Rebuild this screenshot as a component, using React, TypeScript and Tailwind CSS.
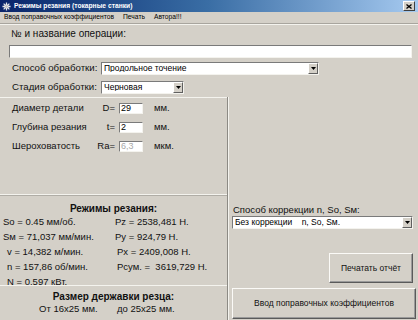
import React from "react";

const font = { fontFamily: '"Liberation Sans", Arial, sans-serif' };

function Sunken({ className = "", children }: { className?: string; children?: React.ReactNode }) {
  return (
    <div
      className={
        "border border-t-[#7a7a7a] border-l-[#7a7a7a] border-b-[#f4f3ee] border-r-[#f4f3ee] " + className
      }
    >
      {children}
    </div>
  );
}

function Select({ value, className = "" }: { value: string; className?: string }) {
  return (
    <Sunken className={"flex items-center bg-white h-[13px] " + className}>
      <span className="flex-1 pl-[2px] text-[8.5px] leading-none text-black whitespace-pre truncate">{value}</span>
      <span className="w-[10px] h-[11px] bg-[#d4d0c8] border border-t-white border-l-white border-b-[#606060] border-r-[#606060] flex items-center justify-center">
        <svg width="5" height="3" viewBox="0 0 5 3">
          <path d="M0 0h5L2.5 3z" fill="#000" />
        </svg>
      </span>
    </Sunken>
  );
}

function ParamRow({ label, sym, value, unit, disabled }: { label: string; sym: string; value: string; unit: string; disabled?: boolean }) {
  return (
    <div className="flex items-center h-[19px] text-[9.5px] text-[#111] whitespace-nowrap">
      <span className="w-[88px] pl-[12px]">{label}</span>
      <span className="w-[31px] text-right pr-[4px]">{sym}</span>
      <Sunken className="w-[24px] h-[11px] bg-white flex items-center">
        <span className={"pl-[1px] text-[9px] leading-none " + (disabled ? "text-[#a8a8a8]" : "text-black")}>{value}</span>
      </Sunken>
      <span className="pl-[11px] text-[9.5px]">{unit}</span>
    </div>
  );
}

function Button({ children, className = "" }: { children: React.ReactNode; className?: string }) {
  return (
    <div
      className={
        "flex items-center justify-center bg-[#d4d0c8] border border-t-[#fbfaf7] border-l-[#fbfaf7] border-b-[#5a5a5a] border-r-[#5a5a5a] shadow-[inset_-1px_-1px_0_#9a9a9a] text-[8.5px] text-[#111] " +
        className
      }
    >
      {children}
    </div>
  );
}

export default function App() {
  return (
    <div style={font} className="w-[418px] h-[320px] bg-[#d4d0c8] flex flex-col overflow-hidden select-none">
      {/* title bar */}
      <div className="h-[12px] flex items-center bg-gradient-to-r from-[#0a246a] via-[#3a6ea5] to-[#a6caf0] pl-[2px] pr-[3px]">
        <svg width="9" height="9" viewBox="0 0 10 10" className="mr-[3px]">
          <g stroke="#e8e8e8" strokeWidth="1.4">
            <path d="M5 0.5v9M0.5 5h9M1.8 1.8l6.4 6.4M8.2 1.8l-6.4 6.4" />
          </g>
          <circle cx="5" cy="5" r="2" fill="#c0c0c0" stroke="#fff" strokeWidth="0.6" />
        </svg>
        <span className="text-white font-bold text-[6.7px] leading-none">Режимы резания (токарные станки)</span>
        <div className="ml-auto w-[12px] h-[10px] bg-[#d4d0c8] border border-t-white border-l-white border-b-[#404040] border-r-[#404040] flex items-center justify-center">
          <svg width="6" height="5" viewBox="0 0 6 5">
            <path d="M0.5 0.5l5 4M5.5 0.5l-5 4" stroke="#000" strokeWidth="1.3" />
          </svg>
        </div>
      </div>

      {/* menu bar */}
      <div className="h-[12px] flex items-center text-[6.7px] text-black leading-none pl-[4px] gap-[9px] border-b border-b-[#a8a59e] shadow-[0_1px_0_#f4f3ee]">
        <span>Ввод поправочных коэффициентов</span>
        <span>Печать</span>
        <span>Автора!!!</span>
      </div>

      {/* top section */}
      <div className="pl-[9px] pr-[6px] pt-[5px] h-[73px]">
        <div className="text-[10px] leading-none pl-[2px] text-[#111]">№ и название операции:</div>
        <Sunken className="mt-[6px] h-[13px] bg-white" />
        <div className="flex items-center mt-[3px] h-[14px]">
          <span className="w-[92px] pl-[3px] text-[9.7px] text-[#111]">Способ обработки:</span>
          <Select value="Продольное точение" className="w-[218px]" />
        </div>
        <div className="flex items-center mt-[5px] h-[14px]">
          <span className="w-[92px] pl-[3px] text-[9.7px] text-[#111]">Стадия обработки:</span>
          <Select value="Черновая" className="w-[83px]" />
        </div>
      </div>

      {/* bottom */}
      <div className="flex flex-1">
        <div className="w-[229px] flex flex-col border-r border-r-[#8c8a84] shadow-[1px_0_0_#f4f3ee]">
          <div className="h-[98px] pt-[1px] border-t border-t-[#f4f3ee] border-b border-b-[#f4f3ee] shadow-[0_1px_0_#b0ada6]">
            <ParamRow label="Диаметр детали" sym="D=" value="29" unit="мм." />
            <ParamRow label="Глубина резания" sym="t=" value="2" unit="мм." />
            <ParamRow label="Шероховатость" sym="Ra=" value="6,3" unit="мкм." disabled />
          </div>
          <div className="h-[91px] pt-[6px] text-[9.5px] text-[#111] border-b border-b-[#f4f3ee]">
            <div className="text-center font-bold text-[10px] h-[14px]">Режимы резания:</div>
            <div className="grid grid-cols-[112px_1fr] auto-rows-[15px] items-center whitespace-pre">
              <span className="pl-[3px]">So = 0.45 мм/об.</span>
              <span className="pl-[3px]">Pz = 2538,481 Н.</span>
              <span className="pl-[3px]">Sм = 71,037 мм/мин.</span>
              <span className="pl-[3px]">Py = 924,79 Н.</span>
              <span className="pl-[7px]">v = 14,382 м/мин.</span>
              <span className="pl-[5px]">Px = 2409,008 Н.</span>
              <span className="pl-[7px]">n = 157,86 об/мин.</span>
              <span className="pl-[5px]">Pсум. =  3619,729 Н.</span>
              <span className="pl-[7px]">N = 0.597 кВт.</span>
            </div>
          </div>
          <div className="flex-1 pt-[3px] text-[#111]">
            <div className="text-center font-bold text-[10px] h-[13px]">Размер державки резца:</div>
            <div className="flex text-[9.5px] whitespace-pre">
              <span className="pl-[39px] w-[117px]">От 16x25 мм.</span>
              <span>до 25x25 мм.</span>
            </div>
          </div>
        </div>

        <div className="flex-1 flex flex-col pl-[4px] pr-[2px] pt-[106px]">
          <div className="text-[9.5px] text-[#111] h-[13px] pl-[1px]">Способ коррекции n, So, Sм:</div>
          <Select value="Без коррекции    n, So, Sм." className="w-[181px]" />
          <Button className="mt-[24px] ml-auto mr-[3px] w-[84px] h-[30px]">Печатать отчёт</Button>
          <Button className="mt-[5px] w-[184px] h-[31px]">Ввод поправочных коэффициентов</Button>
        </div>
      </div>
    </div>
  );
}
